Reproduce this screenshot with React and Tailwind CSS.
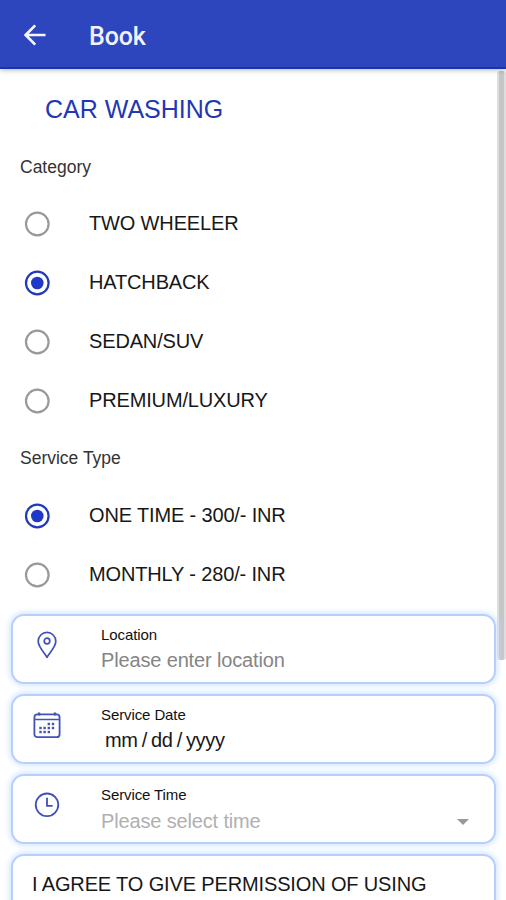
const fieldCard =
  'flex h-[70px] shrink-0 rounded-[13px] border-2 border-[#b9cffb] bg-white shadow-[0_0_6px_1px_#c9e0ff]';

function Radio({ label, checked }) {
  return (
    <div className="flex h-[59px] items-center">
      <svg viewBox="0 0 26 26" className="ml-6 h-[26px] w-[26px] shrink-0" fill="none">
        <circle cx="13.3" cy="13" r="11.3" stroke={checked ? '#2038bd' : '#999999'} strokeWidth="2.2" />
        {checked && <circle cx="13.3" cy="13" r="6.3" fill="#2038c8" />}
      </svg>
      <span className="mb-[2px] ml-[39px] text-[20px] leading-6 tracking-[-0.15px] text-[#171717]">{label}</span>
    </div>
  );
}

function Pin() {
  return (
    <svg viewBox="0 0 28 28" className="h-7 w-7" fill="none" stroke="#3f50b8" strokeWidth="1.7">
      <path d="M14 26.3C12 22 5.2 16.3 5.2 10.2a8.8 8.8 0 0 1 17.6 0C22.8 16.3 16 22 14 26.3Z" strokeLinejoin="round" />
      <circle cx="14" cy="10" r="2.8" />
    </svg>
  );
}

function Calendar() {
  const dots = [
    [15.8, 13], [20, 13],
    [7.5, 17], [11.6, 17], [15.8, 17], [20, 17],
    [7.5, 21], [11.6, 21], [15.8, 21],
  ];
  return (
    <svg viewBox="0 0 28 28" className="h-7 w-7" fill="none" stroke="#4252ba">
      <rect x="1.4" y="3.4" width="25.2" height="22.8" rx="3" strokeWidth="1.8" />
      <path d="M2 8.5h24" strokeWidth="1.5" />
      <path d="M6 1.4v3M22 1.4v3" strokeWidth="2.4" />
      {dots.map(([x, y]) => (
        <rect key={`${x}-${y}`} x={x - 1.2} y={y - 1.2} width="2.4" height="2.4" fill="#4252ba" stroke="none" />
      ))}
    </svg>
  );
}

function Clock() {
  return (
    <svg viewBox="0 0 28 28" className="h-7 w-7" fill="none" stroke="#3f50b8">
      <circle cx="14" cy="13.8" r="11.3" strokeWidth="1.8" />
      <path d="M14 6.8v8.1h5.6" strokeWidth="1.8" />
    </svg>
  );
}

function Field({ icon, label, children }) {
  return (
    <div className={fieldCard}>
      <div className="ml-5 mt-[15px] w-[68px] shrink-0">{icon}</div>
      <div className="min-w-0 flex-1 pt-[10px]">
        <div className="text-[15px] leading-[18px] tracking-[-0.1px] text-[#111111]">{label}</div>
        {children}
      </div>
    </div>
  );
}

export default function App() {
  return (
    <div className="relative flex h-[900px] w-[506px] flex-col overflow-hidden bg-white font-['Liberation_Sans',Arial,sans-serif]">
      <header className="relative z-10 flex h-[69px] shrink-0 items-center border-b-2 border-[#1834b5] bg-[#2d45bd] pt-[3px] shadow-[0_1px_5px_rgba(0,0,0,0.3)]">
        <svg viewBox="0 0 24 24" className="ml-[23px] h-6 w-6" fill="none" stroke="#f4f5ff" strokeWidth="2.7">
          <path d="M22.5 12H3M12.2 2.4 2.6 12l9.6 9.6" />
        </svg>
        <h1 className="ml-[42px] mt-[3px] font-['Roboto',sans-serif] text-[25px] font-medium leading-8 tracking-[-0.1px] text-[#f0f2ff]">Book</h1>
      </header>
      <div className="absolute right-0 top-[71px] h-[589px] w-[9px] rounded-[3px] border-x-2 border-[#dedede] bg-[#c6c6c6]" />
      <main className="relative flex flex-1 flex-col">
        <h2 className="ml-[45px] mt-[24px] h-8 text-[25px] leading-8 text-[#2237b4]">CAR WASHING</h2>
        <h3 className="ml-5 mt-[30px] h-6 text-[17.5px] leading-6 text-[#333333]">Category</h3>
        <div className="mt-[15px]">
          <Radio label="TWO WHEELER" />
          <Radio label="HATCHBACK" checked />
          <Radio label="SEDAN/SUV" />
          <Radio label="PREMIUM/LUXURY" />
        </div>
        <h3 className="ml-5 mt-[16px] h-6 text-[17.5px] leading-6 text-[#333333]">Service Type</h3>
        <div className="mt-[16px]">
          <Radio label="ONE TIME - 300/- INR" checked />
          <Radio label="MONTHLY - 280/- INR" />
        </div>
        <div className="ml-[11px] mt-[10px] flex w-[485px] flex-col gap-[10px]">
          <Field icon={<Pin />} label="Location">
            <div className="mt-[4px] text-[20px] leading-6 tracking-[-0.15px] text-[#858585]">Please enter location</div>
          </Field>
          <Field icon={<Calendar />} label="Service Date">
            <div className="ml-1 mt-[4px] flex gap-[4px] text-[20px] leading-6 tracking-[-0.3px] text-[#171717]">
              <span>mm</span><span>/</span><span>dd</span><span>/</span><span>yyyy</span>
            </div>
          </Field>
          <Field icon={<Clock />} label="Service Time">
            <div className="mt-[5px] flex items-center justify-between text-[20px] leading-6 tracking-[-0.15px] text-[#b0b0b0]">
              Please select time
              <svg viewBox="0 0 12 6" className="mr-[25px] mt-[2px] h-[6px] w-3" fill="#999999"><path d="M0 0h12L6 6Z" /></svg>
            </div>
          </Field>
          <div className="h-[90px] shrink-0 rounded-[13px] border-2 border-[#b9cffb] bg-white pl-[19px] pt-[16px] text-[20px] leading-6 tracking-[-0.14px] text-[#171717] shadow-[0_0_6px_1px_#c9e0ff]">
            I AGREE TO GIVE PERMISSION OF USING
          </div>
        </div>
      </main>
    </div>
  );
}
